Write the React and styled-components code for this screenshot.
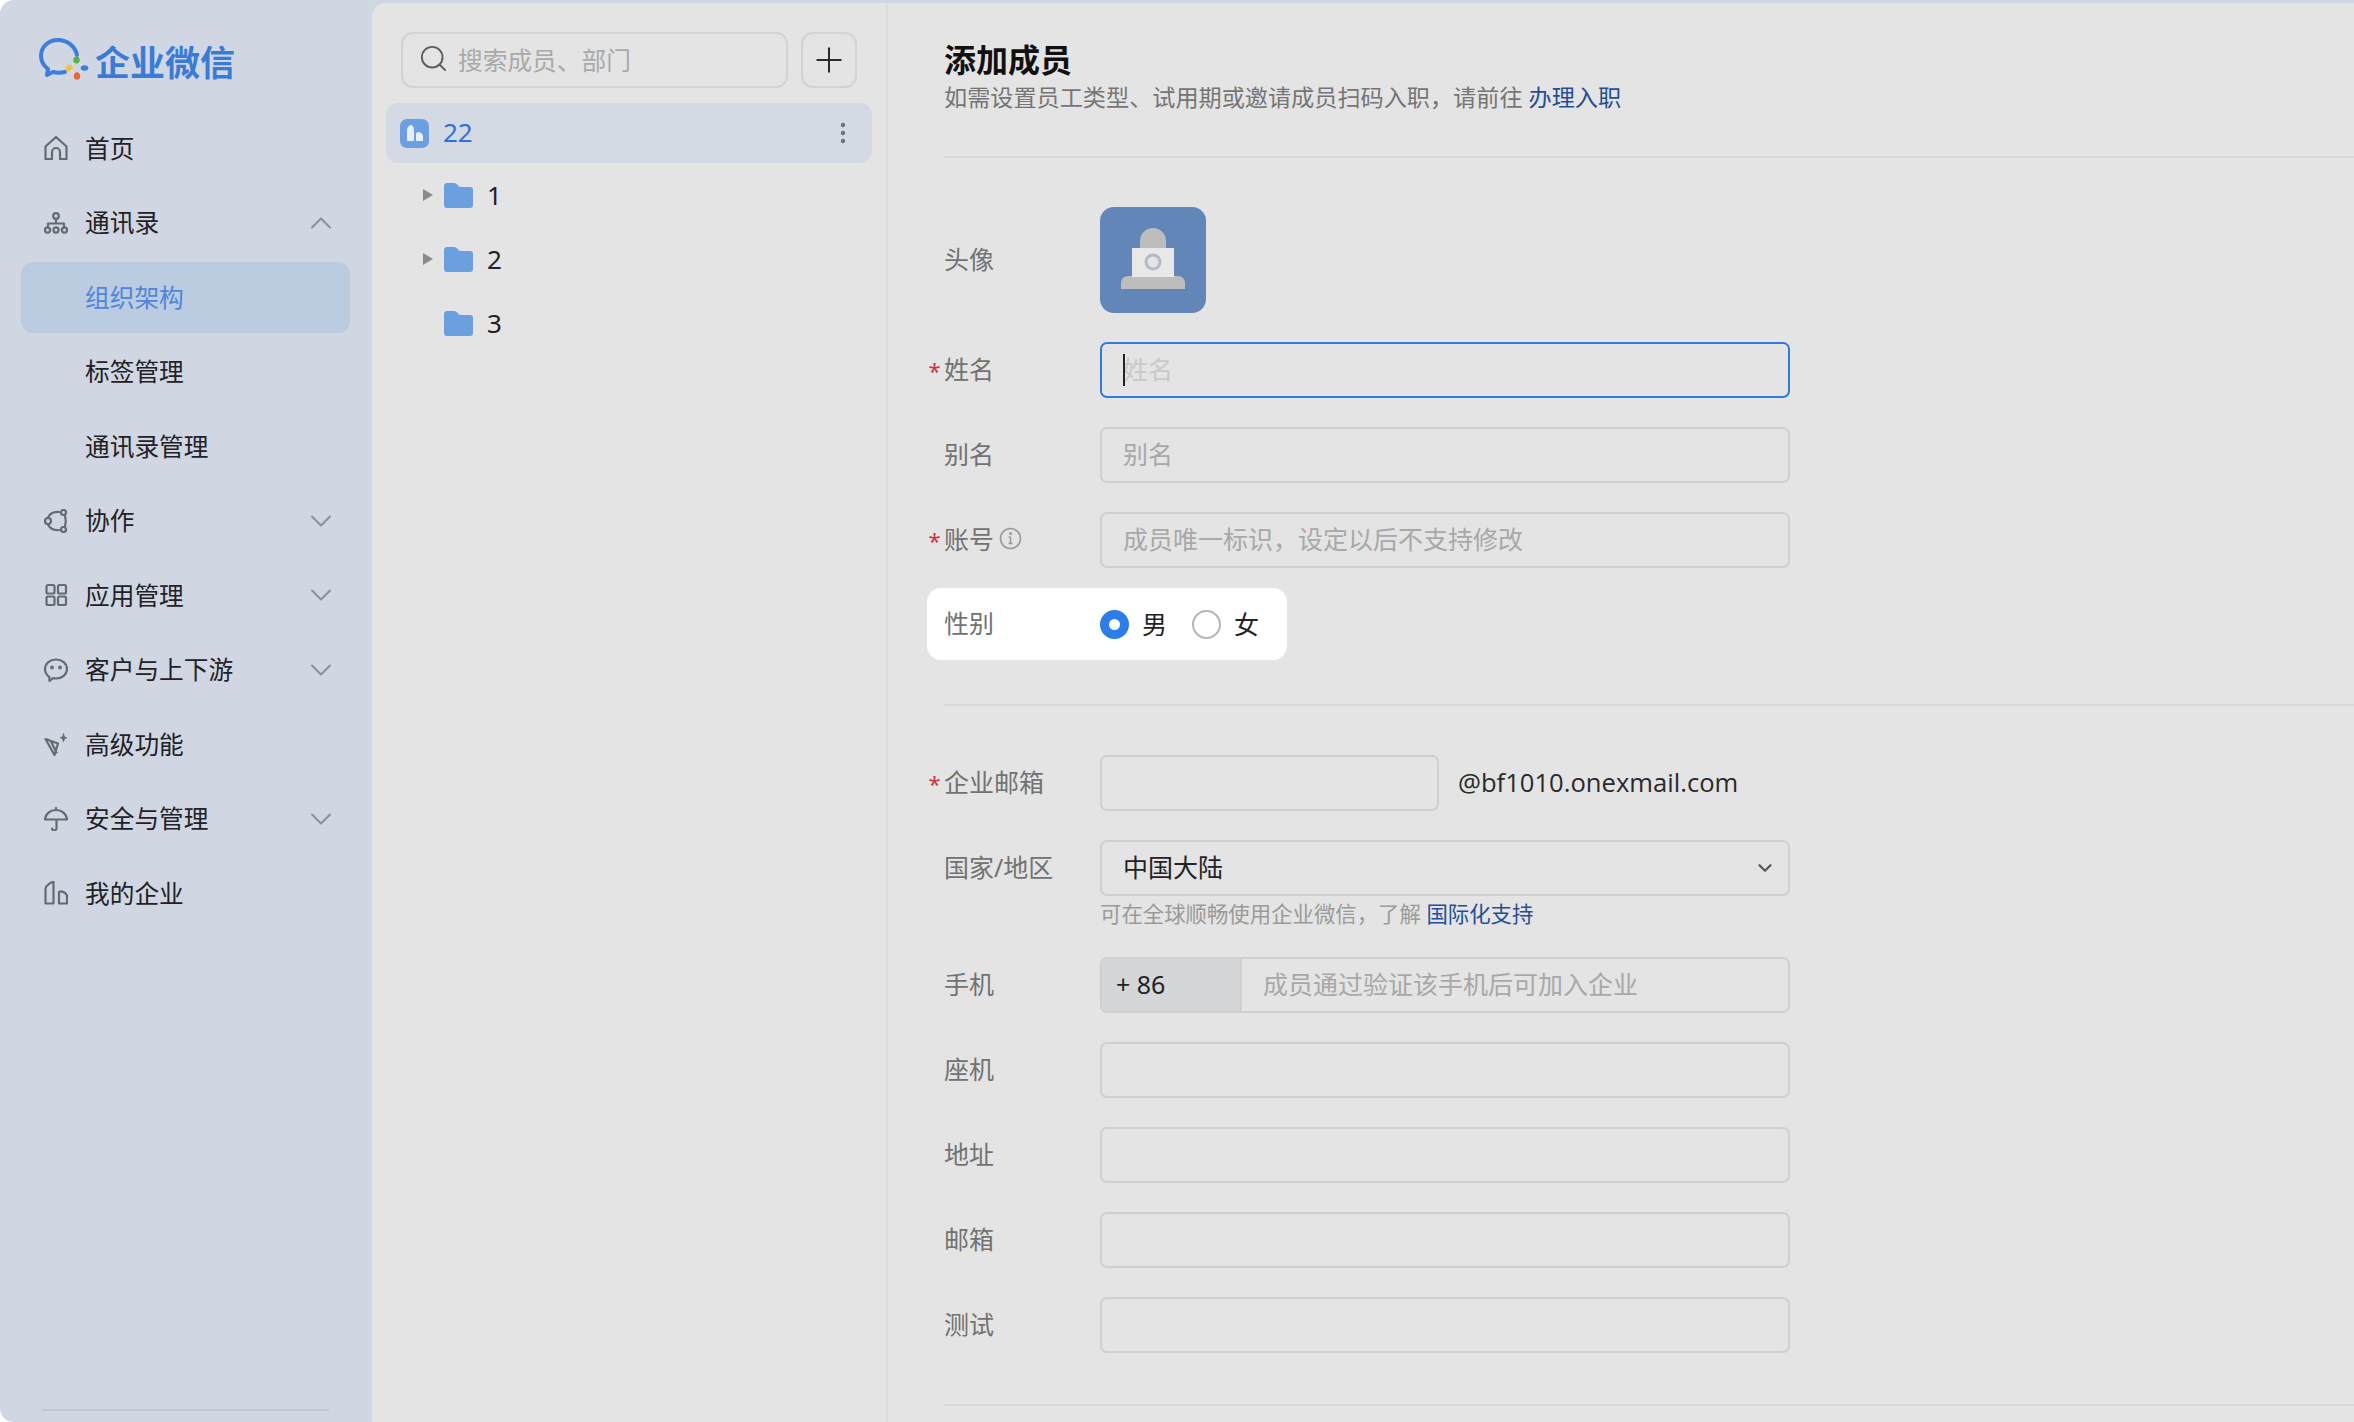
import React from 'react';
import styled, { createGlobalStyle } from 'styled-components';
import { ChevronDown, ChevronUp, Plus, Search } from 'lucide-react';

const FONT = `"Noto Sans", "Noto Sans CJK SC", sans-serif`;

const GlobalStyle = createGlobalStyle`
    html, body {
        margin: 0;
        padding: 0;
        background: #ffffff;
    }
    * {
        box-sizing: border-box;
    }
`;

const Page = styled.div`
    display: flex;
    width: 2354px;
    height: 1422px;
    overflow: hidden;
    font-family: ${FONT};
    background: #d0d7e2;
    border-radius: 14px 0 0 14px;
`;

const Sidebar = styled.aside`
    display: flex;
    flex-direction: column;
    flex: 0 0 372px;
    padding: 0 22px 0 21px;
`;

const Logo = styled.div`
    display: flex;
    align-items: center;
    gap: 6px;
    height: 112.5px;
    padding: 8px 0 0 18px;
    font-size: 35px;
    font-weight: 700;
    color: #3a7bd8;
    white-space: nowrap;
`;

const NavList = styled.nav`
    display: flex;
    flex-direction: column;
    gap: 3.5px;
`;

const NavItem = styled.div`
    display: flex;
    align-items: center;
    gap: 17px;
    height: 71px;
    padding-left: ${(p) => (p.$sub ? '64px' : '23px')};
    padding-right: 11px;
    border-radius: 12px;
    font-size: 24.7px;
    color: ${(p) => (p.$active ? '#4f86dc' : '#1f2226')};
    background: ${(p) => (p.$active ? '#bccce0' : 'transparent')};
    svg {
        flex: none;
    }
`;

const NavLabel = styled.span`
    flex: 1;
    padding-bottom: 3px;
    white-space: nowrap;
`;

const SideFoot = styled.div`
    height: 2px;
    margin: auto 21px 11px 21px;
    background: #bfc8d5;
`;

const Workspace = styled.div`
    display: flex;
    flex: 1;
    margin-top: 3px;
    border-top-left-radius: 14px;
    background: #e4e4e4;
    overflow: hidden;
`;

const TreePanel = styled.section`
    flex: 0 0 516px;
    padding: 29px 14px 0 14px;
    border-right: 2px solid #dcdcdc;
`;

const SearchBar = styled.div`
    display: flex;
    gap: 13px;
    padding-left: 15px;
    padding-right: 15px;
    margin-bottom: 15px;
`;

const SearchBox = styled.div`
    display: flex;
    align-items: center;
    gap: 9px;
    flex: 1;
    height: 56px;
    padding: 0 0 3px 15px;
    border: 2px solid #d3d3d3;
    border-radius: 12px;
    font-size: 24.7px;
    color: #a9a9a9;
`;

const AddButton = styled.div`
    display: flex;
    align-items: center;
    justify-content: center;
    flex: 0 0 56px;
    height: 56px;
    border: 2px solid #d3d3d3;
    border-radius: 12px;
    color: #2a2a2a;
`;

const RootRow = styled.div`
    display: flex;
    align-items: center;
    gap: 15px;
    height: 60px;
    padding: 0 26px 0 14px;
    border-radius: 12px;
    background: #d3dae4;
    font-size: 26px;
    color: #2f6fe0;
    span {
        flex: 1;
        padding-bottom: 3px;
        margin-left: -1px;
    }
`;

const RootBadge = styled.div`
    display: flex;
    align-items: center;
    justify-content: center;
    width: 29px;
    height: 29px;
    border-radius: 7px;
    background: #6a9fe2;
`;

const TreeRow = styled.div`
    display: flex;
    align-items: center;
    height: 64px;
    padding-left: 36px;
    font-size: 26px;
    color: #1f2226;
    &:first-of-type {
        margin-top: 2px;
    }
`;

const Caret = styled.div`
    width: 22px;
    svg {
        display: ${(p) => (p.$hidden ? 'none' : 'block')};
    }
`;

const TreeName = styled.span`
    margin-left: 14px;
`;

const Main = styled.main`
    flex: 1;
    padding: 37px 0 0 56px;
`;

const Title = styled.h1`
    margin: 0;
    font-size: 32px;
    line-height: 40px;
    font-weight: 700;
    color: #111111;
`;

const Subtitle = styled.p`
    margin: 2px 0 44px;
    font-size: 23.15px;
    line-height: 30px;
    color: #757575;
`;

const LinkText = styled.a`
    color: #1f4f96;
`;

const Divider = styled.div`
    height: 2px;
    background: #d9d9d9;
    margin-top: ${(p) => p.$before || '0'};
    margin-bottom: ${(p) => p.$after || '49px'};
`;

const Section = styled.div`
    display: flex;
    flex-direction: column;
    gap: 29px;
`;

const Row = styled.div`
    display: grid;
    grid-template-columns: 17px 156px 690px;
    align-items: ${(p) => (p.$top ? 'start' : 'center')};
    margin-left: -17px;
`;

const GenderRow = styled.div`
    display: grid;
    grid-template-columns: 17px 156px auto;
    align-items: center;
    width: 360px;
    height: 72px;
    margin: -9px 0 44px -17px;
    border-radius: 14px;
    background: #ffffff;
`;

const Star = styled.span`
    margin-left: -2px;
    font-size: 22px;
    line-height: 24px;
    color: #cc3340;
    text-align: center;
`;

const Label = styled.label`
    display: flex;
    align-items: center;
    gap: 5px;
    height: ${(p) => (p.$top ? '56px' : 'auto')};
    padding-bottom: 4px;
    font-size: 25px;
    color: #727272;
    white-space: nowrap;
`;

const Avatar = styled.div`
    width: 106px;
    height: 106px;
    border-radius: 14px;
    background: #6286b8;
    svg {
        display: block;
    }
`;

const Field = styled.div`
    position: relative;
    display: flex;
    height: 56px;
    width: ${(p) => p.$width || '100%'};
    border: 2px solid ${(p) => (p.$focus ? '#2f7be0' : '#d0d0d0')};
    border-radius: 7px;
    overflow: hidden;
`;

const TextInput = styled.input`
    flex: 1;
    min-width: 0;
    height: 100%;
    padding: 0 0 3px 21px;
    border: 0;
    outline: 0;
    background: transparent;
    font-family: ${FONT};
    font-size: 25px;
    color: #222222;
    &::placeholder {
        color: ${(p) => (p.$focus ? '#c9c9c9' : '#a8a8a8')};
        opacity: 1;
    }
`;

const Cursor = styled.i`
    position: absolute;
    left: 21px;
    top: 10px;
    width: 2px;
    height: 32px;
    background: #222222;
`;

const Radios = styled.div`
    display: flex;
    align-items: center;
    font-size: 25px;
    color: #1f2226;
`;

const RadioDot = styled.span`
    width: 29px;
    height: 29px;
    margin-right: 13px;
    border-radius: 50%;
    background: #ffffff;
    border: ${(p) => (p.$on ? '9px solid #2b7de9' : '2px solid #b5b5b5')};
`;

const RadioText = styled.span`
    margin-right: 25px;
    padding-bottom: 3px;
`;

const EmailWrap = styled.div`
    display: flex;
    align-items: center;
    gap: 19px;
`;

const Suffix = styled.span`
    padding-bottom: 2px;
    font-family: "Open Sans", "Noto Sans", sans-serif;
    font-size: 25.6px;
    color: #2a2a2a;
    white-space: nowrap;
`;

const SelectValue = styled.div`
    display: flex;
    align-items: center;
    justify-content: space-between;
    width: 100%;
    padding: 0 12px 0 21px;
    font-size: 25px;
    color: #1f2226;
`;

const SelectText = styled.span`
    padding-bottom: 4px;
`;

const Hint = styled.div`
    margin-top: 4px;
    height: 28px;
    line-height: 27px;
    font-size: 21.4px;
    color: #9a9a9a;
    white-space: nowrap;
`;

const Prefix = styled.div`
    display: flex;
    align-items: center;
    flex: 0 0 140px;
    padding: 0 0 3px 14px;
    background: #d5d6d8;
    border-right: 2px solid #d0d0d0;
    font-size: 25px;
    color: #222222;
`;

// sidebar icons, all on a 24 box
const ICON = { fill: 'none', stroke: '#666a71', strokeWidth: 2.2, strokeLinejoin: 'round', strokeLinecap: 'round' };

const Ico = ({ children }) => (
    <svg width="24" height="24" viewBox="0 0 24 24" {...ICON}>{children}</svg>
);

const HomeIcon = () => (
    <Ico>
        <path d="M1.500 10.500 12 1l10.500 9.500V23H16v-7a4 4 0 0 0-8 0v7H1.500z" />
    </Ico>
);
const OrgIcon = () => (
    <Ico>
        <circle cx="12" cy="5" r="2.800" />
        <path d="M12 8v4M4 15v-2.500h16V15" />
        <circle cx="3.500" cy="19" r="2.600" />
        <circle cx="12" cy="19" r="2.600" />
        <circle cx="20.500" cy="19" r="2.600" />
    </Ico>
);
const CollabIcon = () => (
    <Ico>
        <path d="M4 8.500C6 4.500 10 2.500 15 3M4 15.500C6 19.500 10 21.500 15 21M21 6.500c1 3.500 1 7.500 0 11" />
        <circle cx="4" cy="12" r="3" />
        <circle cx="19.500" cy="3.500" r="2.500" />
        <circle cx="19.500" cy="20.500" r="2.500" />
    </Ico>
);
const AppsIcon = () => (
    <Ico>
        <rect x="2.500" y="2" width="8" height="8.500" rx="1.500" />
        <rect x="14" y="2" width="8" height="8.500" rx="1.500" />
        <rect x="2.500" y="13.500" width="8" height="8.500" rx="1.500" />
        <rect x="14" y="13.500" width="8" height="8.500" rx="1.500" />
    </Ico>
);
const ChatIcon = () => (
    <Ico>
        <path d="M12 1.500c6 0 11 4 11 9.500s-5 9.500-11 9.500c-1 0-2-.1-3-.4L5.500 23l-.2-4C2.500 17 1 14.200 1 11c0-5.500 5-9.500 11-9.500z" />
        <circle cx="8" cy="9.500" r=".8" />
        <circle cx="16" cy="9.500" r=".8" />
    </Ico>
);
const SparkIcon = () => (
    <Ico>
        <path d="M1.500 7 14 11.500 10.500 23zM7 9.500l5.500 11" />
        <path d="M19.500 2c.4 2.500 1.300 3.400 3.200 3.800-1.900.4-2.800 1.300-3.200 3.800-.4-2.500-1.300-3.400-3.200-3.800 1.900-.4 2.800-1.300 3.200-3.800z" fill="#666a71" strokeWidth="1" />
    </Ico>
);
const UmbrellaIcon = () => (
    <Ico>
        <path d="M12 1v2M1 12.500C1.500 7 6 3 12 3s10.500 4 11 9.500zM12.500 12.500V21a2.200 2.200 0 0 1-4.400.500" />
    </Ico>
);
const CompanyIcon = () => (
    <Ico>
        <path d="M1.500 22.500V7.500C1.500 5 7 1 9.500 1v21.500zM15 22.500V11c0-1 6-1 8 3.500v8z" />
    </Ico>
);

const LogoMark = () => (
    <svg width="50" height="44" viewBox="0 0 50 44">
        <path
            d="M38 17C36 8 28 2 19 2 9 2 2 9 2 18c0 6 3 10 7 13l-1 6 6-3c4 1 8 1 12 0"
            fill="none"
            stroke="#3a7fdc"
            strokeWidth="4"
            strokeLinecap="round"
            strokeLinejoin="round"
        />
        <path d="M37.700 22.300 45.700 30 37.700 38 30 30z" fill="none" stroke="#e8eef4" strokeWidth="1" />
        <ellipse cx="37.500" cy="22" rx="3.200" ry="3.600" fill="#58b14a" />
        <ellipse cx="30" cy="30" rx="4" ry="3" fill="#efc043" transform="rotate(-35 30 30)" />
        <ellipse cx="38" cy="38" rx="3.200" ry="3.800" fill="#e4692f" />
        <ellipse cx="45.500" cy="30" rx="3.800" ry="2.800" fill="#3a7fdc" />
    </svg>
);

const RootGlyph = () => (
    <svg width="20" height="20" viewBox="0 0 20 20" fill="#e8eef6">
        <path d="M2 18V8c0-3 2-6 4-6s3 3 3 6v10zM11 18v-7c0-1.500 2-2.500 4-1.500s3 2 3 4V18z" />
    </svg>
);

const CaretIcon = () => (
    <svg width="11" height="14" viewBox="0 0 11 14">
        <path d="M1 1v12l10-6z" fill="#8a8a8a" />
    </svg>
);

const FolderIcon = () => (
    <svg width="29" height="25" viewBox="0 0 29 25">
        <path d="M0 3a3 3 0 0 1 3-3h7c2 0 3 1 4 2.500 1 1 2 1.500 3 1.500h9a3 3 0 0 1 3 3v15a3 3 0 0 1-3 3H3a3 3 0 0 1-3-3z" fill="#6c9fe0" />
    </svg>
);

const Kebab = () => (
    <svg width="6" height="22" viewBox="0 0 6 22" fill="#6c7078">
        <circle cx="3" cy="3" r="2.200" />
        <circle cx="3" cy="11" r="2.200" />
        <circle cx="3" cy="19" r="2.200" />
    </svg>
);

const InfoIcon = () => (
    <svg width="23" height="23" viewBox="0 0 23 23" fill="none" stroke="#9a9a9a" strokeWidth="1.600">
        <circle cx="11.500" cy="11.500" r="10" />
        <path d="M11.500 10v6.500M9.500 10h2M9.500 16.500h4" />
        <circle cx="11.500" cy="6.500" r=".7" />
    </svg>
);

const AvatarArt = () => (
    <svg width="106" height="106" viewBox="0 0 106 106">
        <path d="M40 42V34a13 13 0 0 1 26 0v8z" fill="#bdbdbd" />
        <path d="M21 82v-6c0-4 3-7 7-7h50c4 0 7 3 7 7v6z" fill="#bdbdbd" />
        <rect x="32" y="41" width="42" height="29" fill="#e8e8e8" />
        <circle cx="53" cy="55" r="7" fill="#e4e4e4" stroke="#b4bbc6" strokeWidth="3" />
    </svg>
);

const navItems = [
    { text: '首页', icon: <HomeIcon /> },
    { text: '通讯录', icon: <OrgIcon />, arrow: 'up' },
    { text: '组织架构', sub: true, active: true },
    { text: '标签管理', sub: true },
    { text: '通讯录管理', sub: true },
    { text: '协作', icon: <CollabIcon />, arrow: 'down' },
    { text: '应用管理', icon: <AppsIcon />, arrow: 'down' },
    { text: '客户与上下游', icon: <ChatIcon />, arrow: 'down' },
    { text: '高级功能', icon: <SparkIcon /> },
    { text: '安全与管理', icon: <UmbrellaIcon />, arrow: 'down' },
    { text: '我的企业', icon: <CompanyIcon /> },
];

function App() {
    return (
        <Page>
            <GlobalStyle />
            <Sidebar>
                <Logo>
                    <LogoMark />
                    企业微信
                </Logo>
                <NavList>
                    {navItems.map((item) => (
                        <NavItem key={item.text} $sub={item.sub} $active={item.active}>
                            {item.icon}
                            <NavLabel>{item.text}</NavLabel>
                            {item.arrow === 'up' && <ChevronUp size={36} color="#8a8f98" strokeWidth={1.3} />}
                            {item.arrow === 'down' && <ChevronDown size={36} color="#8a8f98" strokeWidth={1.3} />}
                        </NavItem>
                    ))}
                </NavList>
                <SideFoot />
            </Sidebar>
            <Workspace>
                <TreePanel>
                    <SearchBar>
                        <SearchBox>
                            <Search size={31} color="#5f5f5f" strokeWidth={1.5} />
                            搜索成员、部门
                        </SearchBox>
                        <AddButton>
                            <Plus size={40} strokeWidth={1.2} />
                        </AddButton>
                    </SearchBar>
                    <RootRow>
                        <RootBadge><RootGlyph /></RootBadge>
                        <span>22</span>
                        <Kebab />
                    </RootRow>
                    {['1', '2', '3'].map((name) => (
                        <TreeRow key={name}>
                            <Caret $hidden={name === '3'}><CaretIcon /></Caret>
                            <FolderIcon />
                            <TreeName>{name}</TreeName>
                        </TreeRow>
                    ))}
                </TreePanel>
                <Main>
                    <Title>添加成员</Title>
                    <Subtitle>如需设置员工类型、试用期或邀请成员扫码入职，请前往 <LinkText>办理入职</LinkText></Subtitle>
                    <Divider />
                    <Section>
                        <Row>
                            <span />
                            <Label>头像</Label>
                            <Avatar><AvatarArt /></Avatar>
                        </Row>
                        <Row>
                            <Star>*</Star>
                            <Label>姓名</Label>
                            <Field $focus>
                                <TextInput placeholder="姓名" $focus readOnly />
                                <Cursor />
                            </Field>
                        </Row>
                        <Row>
                            <span />
                            <Label>别名</Label>
                            <Field><TextInput placeholder="别名" readOnly /></Field>
                        </Row>
                        <Row>
                            <Star>*</Star>
                            <Label>账号 <InfoIcon /></Label>
                            <Field><TextInput placeholder="成员唯一标识，设定以后不支持修改" readOnly /></Field>
                        </Row>
                        <GenderRow>
                            <span />
                            <Label>性别</Label>
                            <Radios>
                                <RadioDot $on />
                                <RadioText>男</RadioText>
                                <RadioDot />
                                <RadioText>女</RadioText>
                            </Radios>
                        </GenderRow>
                    </Section>
                    <Divider />
                    <Section>
                        <Row>
                            <Star>*</Star>
                            <Label>企业邮箱</Label>
                            <EmailWrap>
                                <Field $width="339px"><TextInput readOnly /></Field>
                                <Suffix>@bf1010.onexmail.com</Suffix>
                            </EmailWrap>
                        </Row>
                        <Row $top>
                            <span />
                            <Label $top>国家/地区</Label>
                            <div>
                                <Field>
                                    <SelectValue>
                                        <SelectText>中国大陆</SelectText>
                                        <ChevronDown size={22} color="#555555" strokeWidth={2.4} />
                                    </SelectValue>
                                </Field>
                                <Hint>可在全球顺畅使用企业微信，了解 <LinkText>国际化支持</LinkText></Hint>
                            </div>
                        </Row>
                        <Row>
                            <span />
                            <Label>手机</Label>
                            <Field>
                                <Prefix>+ 86</Prefix>
                                <TextInput placeholder="成员通过验证该手机后可加入企业" readOnly />
                            </Field>
                        </Row>
                        {['座机', '地址', '邮箱', '测试'].map((name) => (
                            <Row key={name}>
                                <span />
                                <Label>{name}</Label>
                                <Field><TextInput readOnly /></Field>
                            </Row>
                        ))}
                    </Section>
                    <Divider $before="51px" />
                </Main>
            </Workspace>
        </Page>
    );
}

export default App;
